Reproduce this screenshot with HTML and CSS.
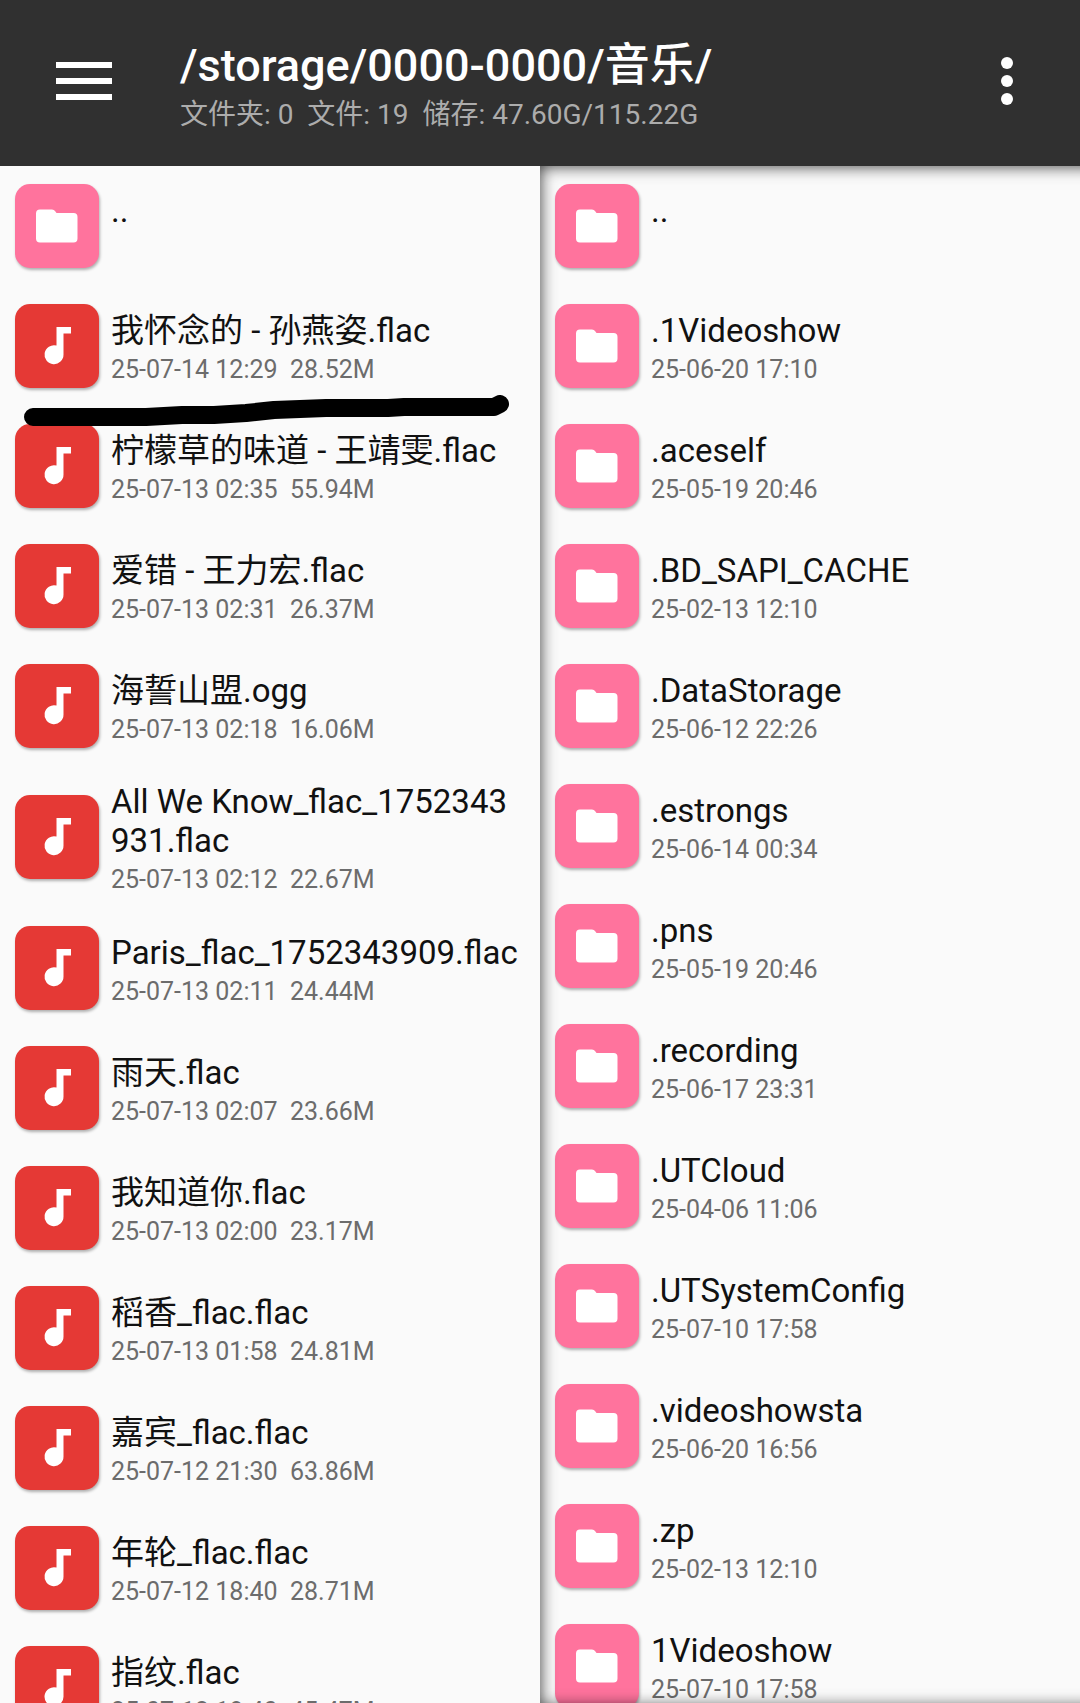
FILE: index.html
```html
<!DOCTYPE html>
<html lang="zh-CN">
<head>
<meta charset="UTF-8">
<meta name="viewport" content="width=device-width, initial-scale=1.0">
<title>音乐</title>
<link rel="stylesheet" href="styles.css">
</head>
<body>

<!-- shared icons -->
<svg class="sprite" aria-hidden="true">
    <symbol id="folder" viewBox="0 0 84 84">
        <path fill="#fff" d="M24 25.500h13q2 0 3 1.500l1.500 2h17q4 0 4 4v21.500q0 4-4 4H25q-4 0-4-4v-25q0-4 4-4z"/>
    </symbol>
    <symbol id="note" viewBox="0 0 84 84">
        <path fill="#fff" d="M41.500 23H56v6.500h-7.500V50.500a9.500 9.500 0 1 1-7-9z"/>
    </symbol>
</svg>

<header class="topbar">
    <button class="icon-btn menu-btn" aria-label="菜单">
        <svg width="56" height="38" viewBox="0 0 56 38"><path fill="#fff" d="M0 0h56v6H0zM0 16h56v6H0zM0 32h56v6H0z"/></svg>
    </button>
    <div class="heading">
        <h1>/storage/0000-0000/音乐/</h1>
        <p>文件夹: 0&nbsp; 文件: 19&nbsp; 储存: 47.60G/115.22G</p>
    </div>
    <button class="icon-btn more-btn" aria-label="更多">
        <svg width="12" height="48" viewBox="0 0 12 48"><g fill="#fff"><circle cx="6" cy="6" r="6"/><circle cx="6" cy="24" r="6"/><circle cx="6" cy="42" r="6"/></g></svg>
    </button>
</header>

<main class="panes">
    <section class="pane" id="left" aria-label="音乐"></section>
    <section class="pane pane-right" id="right" aria-label="存储"></section>
    <svg class="marker" width="486" height="32" viewBox="0 0 486 32" aria-hidden="true">
        <path d="M9 22H122L158 20H190L222 18L250 15L302 13H364L380 12H470L476 9"/>
    </svg>
</main>

<script src="script.js"></script>
</body>
</html>
```
FILE: styles.css
```css
* {
    box-sizing: border-box;
}

body {
    margin: 0;
    height: 100vh;
    display: flex;
    flex-direction: column;
    overflow: hidden;
    background-color: #fafafa;
    color: #111;
    font-family: Roboto, "Noto Sans CJK SC", sans-serif;
}

.sprite {
    display: none;
}

/* top bar */
.topbar {
    display: flex;
    align-items: center;
    height: 166px;
    flex-shrink: 0;
    padding: 0 67px 4px 56px;
    background-color: #303030;
    color: #fff;
}

.icon-btn {
    display: flex;
    padding: 0;
    border: none;
    background: none;
    cursor: pointer;
}

.heading {
    flex: 1;
    padding: 12px 0 0 68px;
}

h1 {
    margin: 0;
    font-size: 45px;
    line-height: 56px;
    font-weight: 500;
}

.heading p {
    margin: 0;
    font-size: 28px;
    line-height: 42px;
    color: #acacac;
}

/* file lists */
.panes {
    position: relative;
    flex: 1;
    min-height: 0;
    display: grid;
    grid-template-columns: 1fr 1fr;
}

.pane {
    min-height: 0;
    overflow: hidden;
    position: relative;
}

/* inactive pane, shaded along its edges */
.pane-right::after {
    content: "";
    position: absolute;
    inset: 0 -20px -4px 0;
    box-shadow: inset 0 0 16px rgba(0, 0, 0, 0.8);
    pointer-events: none;
}

.pane ul {
    list-style: none;
    margin: 0;
    padding: 0;
}

.entry {
    display: flex;
    align-items: center;
    gap: 12px;
    min-height: 120px;
    padding: 0 16px 0 15px;
    color: inherit;
    text-decoration: none;
}

.icon {
    width: 84px;
    height: 84px;
    flex-shrink: 0;
    border-radius: 15px;
    box-shadow: 1px 2px 3px rgba(0, 0, 0, 0.3);
}

.icon-folder {
    background-color: #ff739d;
}

.icon-note {
    background-color: #e53935;
}

.info {
    flex: 1;
    min-width: 0;
    padding: 16px 0 9px;
}

.name {
    display: block;
    font-size: 33px;
    line-height: 39px;
    word-break: break-all;
}

.meta {
    display: block;
    min-height: 39px;
    font-size: 25px;
    line-height: 39px;
    color: #6c6c6c;
    white-space: pre;
}

/* hand drawn line under the first song */
.marker {
    position: absolute;
    left: 24px;
    top: 229px;
    fill: none;
    stroke: #000;
    stroke-width: 18px;
    stroke-linecap: round;
    stroke-linejoin: round;
}
```
FILE: script.js
```js
var songs = [
    ['..', ''],
    ['我怀念的 - 孙燕姿.flac', '25-07-14 12:29', '28.52M'],
    ['柠檬草的味道 - 王靖雯.flac', '25-07-13 02:35', '55.94M'],
    ['爱错 - 王力宏.flac', '25-07-13 02:31', '26.37M'],
    ['海誓山盟.ogg', '25-07-13 02:18', '16.06M'],
    ['All We Know_flac_1752343931.flac', '25-07-13 02:12', '22.67M'],
    ['Paris_flac_1752343909.flac', '25-07-13 02:11', '24.44M'],
    ['雨天.flac', '25-07-13 02:07', '23.66M'],
    ['我知道你.flac', '25-07-13 02:00', '23.17M'],
    ['稻香_flac.flac', '25-07-13 01:58', '24.81M'],
    ['嘉宾_flac.flac', '25-07-12 21:30', '63.86M'],
    ['年轮_flac.flac', '25-07-12 18:40', '28.71M'],
    ['指纹.flac', '25-07-12 18:40', '45.47M']
];

var folders = [
    ['..', ''],
    ['.1Videoshow', '25-06-20 17:10'],
    ['.aceself', '25-05-19 20:46'],
    ['.BD_SAPI_CACHE', '25-02-13 12:10'],
    ['.DataStorage', '25-06-12 22:26'],
    ['.estrongs', '25-06-14 00:34'],
    ['.pns', '25-05-19 20:46'],
    ['.recording', '25-06-17 23:31'],
    ['.UTCloud', '25-04-06 11:06'],
    ['.UTSystemConfig', '25-07-10 17:58'],
    ['.videoshowsta', '25-06-20 16:56'],
    ['.zp', '25-02-13 12:10'],
    ['1Videoshow', '25-07-10 17:58']
];

function showList(id, items) {
    var html = '';
    items.forEach(function(item) {
        // only files have a size
        var icon = item[2] ? 'note' : 'folder';
        var meta = item[2] ? item[1] + '  ' + item[2] : item[1];
        html += '<li><a class="entry" href="#">' +
            '<svg class="icon icon-' + icon + '" aria-hidden="true"><use href="#' + icon + '"></use></svg>' +
            '<span class="info"><span class="name">' + item[0] + '</span>' +
            '<span class="meta">' + meta + '</span></span></a></li>';
    });
    document.getElementById(id).innerHTML = '<ul>' + html + '</ul>';
}

showList('left', songs);
showList('right', folders);
```
